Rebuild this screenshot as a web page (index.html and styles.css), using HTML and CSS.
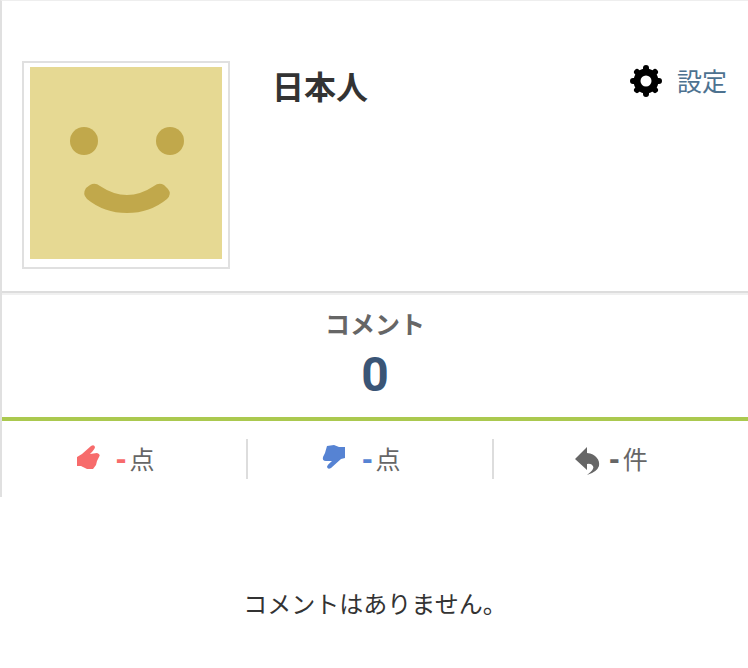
FILE: index.html
```html
<!DOCTYPE html>
<html lang="ja">
<head>
<meta charset="utf-8">
<title>日本人</title>
<link rel="stylesheet" href="styles.css">
</head>
<body>
<main>
  <section class="card">
    <header class="profile">
      <div class="avatar">
        <svg viewBox="0 0 192 192" aria-hidden="true">
          <rect width="192" height="192" fill="#e6d993"/>
          <circle cx="54" cy="74" r="14" fill="#c1a84b"/>
          <circle cx="140" cy="74" r="14" fill="#c1a84b"/>
          <path d="M56 121L60 118Q65 115 70 119Q97 137 124 119Q129 115 134 118L138 122Q142 127 137 132Q120 146 97 146Q74 146 57 132Q52 127 56 121Z" fill="#c1a84b"/>
        </svg>
      </div>
      <h1 class="name">日本人</h1>
      <a class="settings" href="#">
        <svg class="gear" viewBox="-16 -16 32 32" aria-hidden="true">
          <g stroke="#000" stroke-width="6" stroke-linecap="round">
            <path d="M0-13V13M-13 0H13M-9-9L9 9M-9 9L9-9"/>
          </g>
          <circle r="12.5" fill="#000"/>
          <circle r="5.5" fill="#fff"/>
        </svg>
        <span>設定</span>
      </a>
    </header>
    <div class="total">
      <h2 class="total-label">コメント</h2>
      <p class="total-count">0</p>
    </div>
    <ul class="stats">
      <li class="stat good">
        <svg class="icon" viewBox="0 0 26 26" aria-hidden="true"><path d="M1 12L6 9L15 1Q18-1 19 2Q19 4 14 9L21 8Q25 9 23 12L21 16L20 20L17 24L11 24L5 21L1 21Z" fill="currentColor"/></svg>
        <span class="value"><b>-</b>点</span>
      </li>
      <li class="stat bad">
        <svg class="icon" viewBox="0 0 26 26" aria-hidden="true"><path d="M5 1L12 0L17 2L23 2V13L19 14L9 23Q6 25 5 22Q5 20 10 16L4 16Q0 16 1 12L3 8Z" fill="currentColor"/></svg>
        <span class="value"><b>-</b>点</span>
      </li>
      <li class="stat reply">
        <svg class="icon" viewBox="0 0 26 28" aria-hidden="true"><path d="M0 12L12 0V6C21 7 25 13 24 19Q22 25 12 28Q20 22 18 19Q16 16 12 17V23Z" fill="currentColor"/></svg>
        <span class="value"><b>-</b>件</span>
      </li>
    </ul>
  </section>
  <p class="empty">コメントはありません。</p>
</main>
</body>
</html>
```
FILE: styles.css
```css
* {
  box-sizing: border-box;
}

body {
  margin: 0;
  background: #fff;
  color: #333;
  font-family: "Noto Sans CJK JP", sans-serif;
}

h1, h2, p, ul {
  margin: 0;
  padding: 0;
}

svg {
  display: block;
}

.card {
  border-top: 1px solid #eee;
  border-left: 2px solid #e0e0e0;
}

.profile {
  display: flex;
  align-items: flex-start;
  padding: 60px 21px 22px 20px;
  border-bottom: 2px solid #ddd;
}

.avatar {
  width: 208px;
  padding: 4px 6px 8px;
  border: 2px solid #e0e0e0;
}

.name {
  flex: 1;
  margin-left: 42px;
  font-size: 32px;
  line-height: 48px;
}

.settings {
  display: flex;
  align-items: flex-start;
  gap: 15px;
  color: #4d7290;
  font-size: 25px;
  line-height: 38px;
  text-decoration: none;
}

.gear {
  width: 32px;
  height: 32px;
  margin-top: 4px;
}

.total {
  padding: 11px 0 7px;
  border-top: 2px solid #f0f0f0;
  border-bottom: 4px solid #abc94f;
  text-align: center;
}

.total-label {
  color: #666;
  font-size: 25px;
  line-height: 34px;
}

.total-count {
  color: #3a5576;
  font-family: Roboto, "Liberation Sans", sans-serif;
  font-size: 48px;
  font-weight: bold;
  line-height: 70px;
}

.stats {
  display: flex;
  padding: 18px 0;
  list-style: none;
}

.stat {
  display: flex;
  align-items: flex-start;
  justify-content: center;
  gap: 14px;
  width: 33%;
  height: 40px;
  padding-right: 18px;
  border-right: 2px solid #ddd;
  font-size: 25px;
  line-height: 38px;
}

.stat:last-child {
  border-right: 0;
}

.icon {
  width: 26px;
  height: 26px;
  margin-top: 6px;
}

.value {
  display: flex;
  gap: 3px;
  color: #666;
}

.value b {
  font-family: "Liberation Sans", sans-serif;
  font-size: 32px;
}

.good, .good b {
  color: #f76b6b;
}

.bad, .bad b {
  color: #5683d3;
}

.stat.reply {
  gap: 8px;
  padding-right: 12px;
  color: #666;
}

.reply .icon {
  height: 28px;
  margin-top: 8px;
}

.empty {
  padding: 88px 0 45px 2px;
  font-size: 24px;
  line-height: 36px;
  text-align: center;
}
```
